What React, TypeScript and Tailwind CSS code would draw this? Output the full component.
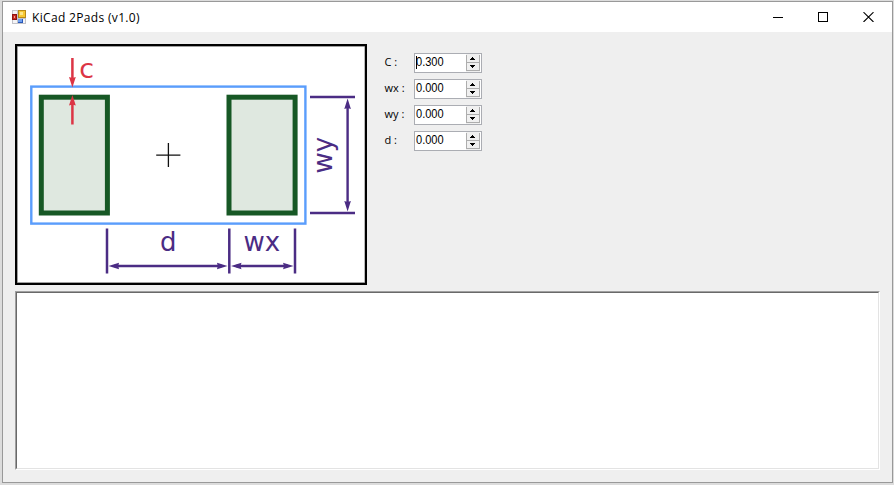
const fields = [
  { label: "C :", value: "0.300", active: true },
  { label: "wx :", value: "0.000" },
  { label: "wy :", value: "0.000" },
  { label: "d :", value: "0.000" },
];

function AppIcon() {
  return (
    <svg width="14" height="14" viewBox="0 0 14 14" shapeRendering="crispEdges">
      <rect x="0.5" y="0.5" width="13" height="13" fill="#f4f4f6" stroke="#c3c3c9" />
      <path d="M5 0h1v14H5zM0 4h5v1H0zM5 8h9v1H5z" fill="#c3c3c9" />
      <rect x="0" y="4" width="5" height="6" fill="#8e1515" />
      <rect x="1" y="5" width="3" height="4" fill="#c92a20" />
      <rect x="2" y="6" width="1" height="2" fill="#f0a090" />
      <rect x="6" y="0" width="8" height="8" fill="#b88a18" />
      <rect x="7" y="1" width="6" height="6" fill="#f8c832" />
      <rect x="8" y="2" width="3" height="3" fill="#fde68a" />
      <rect x="6" y="9" width="5" height="4" fill="#2858b8" />
      <rect x="6" y="9" width="4" height="3" fill="#6fa0f0" />
    </svg>
  );
}

function TitleBar() {
  return (
    <header className="flex h-[30px] items-center bg-white pl-[9px] text-black">
      <div className="-mt-px">
        <AppIcon />
      </div>
      <h1 className="ml-[6px] pt-px font-['Open_Sans','Noto_Sans',sans-serif] text-[12px] leading-4 tracking-[0.33px] whitespace-nowrap">
        KiCad 2Pads (v1.0)
      </h1>
      <div className="ml-auto flex h-full items-center gap-[35px] pr-[18px]">
        <svg width="10" height="10" shapeRendering="crispEdges">
          <path d="M0 5h10v1H0z" />
        </svg>
        <svg width="10" height="10" shapeRendering="crispEdges">
          <rect x="0.5" y="0.5" width="9" height="9" fill="none" stroke="#000" />
        </svg>
        <svg width="11" height="10">
          <path d="M0.5 0.2l10 9.8M10.5 0.2L0.5 10" stroke="#000" strokeWidth="1.1" />
        </svg>
      </div>
    </header>
  );
}

/* Pad footprint drawing with its dimension lines. */
function Diagram() {
  return (
    <svg className="block shrink-0" width="352" height="241" viewBox="15 44 352 241">
      <rect x="15" y="44" width="352" height="241" fill="#000" />
      <rect x="17" y="46" width="348" height="237" fill="#777" />
      <rect x="17.7" y="46.7" width="346.8" height="235.6" fill="#fff" />
      <rect x="31.3" y="86.6" width="274.1" height="137" fill="none" stroke="#5a9dfc" strokeWidth="2.4" />
      <g fill="#dfe8e0" stroke="#175825" strokeWidth="5">
        <rect x="41.3" y="97.2" width="66.1" height="115.8" />
        <rect x="229" y="97.2" width="66.1" height="115.8" />
      </g>
      <path d="M168.4 143v24M156.2 155.1h24.2" stroke="#111" strokeWidth="1.3" />
      <path d="M72.4 58v22M72.4 124.5v-22" stroke="#dc3545" strokeWidth="2.5" />
      <path d="M72.4 87.5l-3.4-10.5q3.4 1.5 6.8 0zM72.4 95l-3.4 10.5q3.4-1.5 6.8 0z" fill="#dc3545" />
      <g stroke="#4b2c84" strokeWidth="2.5" fill="none">
        <path d="M310 97.1h45M310 213h45M107 228.5v45M229.3 228.5v45M295 228.5v45" />
        <path d="M347.6 104v102M114 266h108M236 266h52" strokeWidth="2.4" />
      </g>
      <g fill="#4b2c84">
        <path d="M347.6 98.5l-3.3 10.5q3.3-1.5 6.6 0zM347.6 211.5l-3.3-10.5q3.3 1.5 6.6 0z" />
        <path d="M108.5 266l10.5-3.3q-1.5 3.3 0 6.6zM227.5 266l-10.5-3.3q1.5 3.3 0 6.6z" />
        <path d="M231 266l10.5-3.3q-1.5 3.3 0 6.6zM293.5 266l-10.5-3.3q1.5 3.3 0 6.6z" />
      </g>
      <g className="font-['DejaVu_Sans',sans-serif] text-[26px]" fill="#4b2c84">
        <text x="79.3" y="78.4" fill="#dc3545" className="text-[27px]">c</text>
        <text x="160" y="250.7">d</text>
        <text x="243.5" y="250.7">wx</text>
        <text transform="translate(331.5 173.5) rotate(-90)">wy</text>
      </g>
    </svg>
  );
}

function Spinner() {
  return (
    <svg className="ml-px shrink-0" width="14" height="18" shapeRendering="crispEdges">
      <rect width="14" height="18" fill="#f0f0f0" />
      <path d="M0 1h1v16H0zM13 1h1v16h-1zM0 8h14v1H0zM0 16h14v1H0z" fill="#adadad" />
      <path d="M6 3h1v1h1v1h1v1H4V5h1V4h1zM4 11h5v1H8v1H7v1H6v-1H5v-1H4z" fill="#000" />
    </svg>
  );
}

function NumberField({ label, value, active }: { label: string; value: string; active?: boolean }) {
  return (
    <div className="flex h-5">
      <span className="w-[30px] pt-px pl-[0.5px] font-['Open_Sans','Noto_Sans',sans-serif] text-[11px] leading-4 whitespace-nowrap text-black">
        {label}
      </span>
      <div className="flex w-[68px] border border-[#abadb3] bg-white">
        <div className="flex w-[50px] pl-px">
          <span className={`my-[2px] h-[13px] w-px ${active ? "bg-black" : "bg-transparent"}`} />
          <span className="-ml-px origin-left scale-x-[0.92] font-['Liberation_Sans',Arial,sans-serif] text-[12px] leading-4 text-black">
            {value}
          </span>
        </div>
        <Spinner />
      </div>
    </div>
  );
}

export default function App() {
  return (
    <div className="h-[485px] w-[894px] overflow-hidden bg-[#dcdcdc] pt-px pl-[2px]">
      <div className="flex h-[482px] w-[891px] flex-col border border-[#999] bg-[#efefef]">
        <TitleBar />
        <main className="flex flex-col pt-3 pl-3">
          <div className="flex">
            <Diagram />
            <div className="ml-[17px] flex flex-col gap-[6px] pt-[9px]">
              {fields.map((f) => (
                <NumberField key={f.label} {...f} />
              ))}
            </div>
          </div>
          <div className="mt-[6px] h-[179px] w-[865px] border-t border-r border-b border-l border-t-[#a0a0a0] border-r-white border-b-white border-l-[#a0a0a0]">
            <div className="h-full w-full border border-t-[#696969] border-r-[#e3e3e3] border-b-[#e3e3e3] border-l-[#696969] bg-white" />
          </div>
        </main>
      </div>
    </div>
  );
}
